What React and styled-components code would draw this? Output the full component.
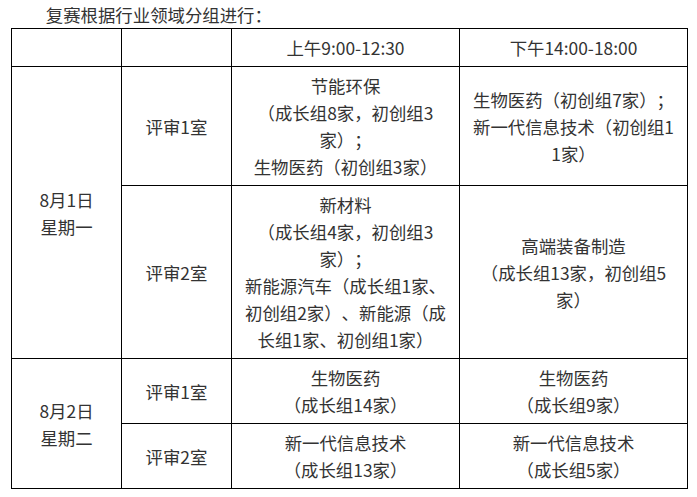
import React from 'react';
import styled, { createGlobalStyle } from 'styled-components';

const Global = createGlobalStyle`
  html, body {
    margin: 0;
    padding: 0;
    background: #fff;
  }
  body {
    font-family: "Noto Sans CJK SC", "Noto Sans", sans-serif;
    color: #333;
    text-spacing-trim: space-all;
  }
`;

const Page = styled.div`
  padding: 1px 0 0 11px;
  font-size: 17.4px;
  line-height: 27px;
`;

const Title = styled.p`
  margin: 0;
  text-indent: 2em;
`;

const Table = styled.table`
  border-collapse: collapse;
  table-layout: fixed;
  width: 677px;
`;

const Cell = styled.td`
  border: 1px solid #000;
  padding: 5px 4px;
  text-align: center;
  vertical-align: middle;
  white-space: nowrap;
  text-spacing-trim: space-all;
`;

const rows = [
  {
    date: ['8月1日', '星期一'],
    rooms: [
      {
        name: '评审1室',
        am: ['节能环保', '（成长组8家，初创组3', '家）；', '生物医药（初创组3家）'],
        pm: ['生物医药（初创组7家）；', '新一代信息技术（初创组1', '1家）'],
      },
      {
        name: '评审2室',
        am: [
          '新材料',
          '（成长组4家，初创组3',
          '家）；',
          '新能源汽车（成长组1家、',
          '初创组2家）、新能源（成',
          '长组1家、初创组1家）',
        ],
        pm: ['高端装备制造', '（成长组13家，初创组5', '家）'],
      },
    ],
  },
  {
    date: ['8月2日', '星期二'],
    rooms: [
      { name: '评审1室', am: ['生物医药', '（成长组14家）'], pm: ['生物医药', '（成长组9家）'] },
      { name: '评审2室', am: ['新一代信息技术', '（成长组13家）'], pm: ['新一代信息技术', '（成长组5家）'] },
    ],
  },
];

function Lines({ items }) {
  return items.map((t, i) => (
    <React.Fragment key={i}>
      {i > 0 && <br />}
      {t}
    </React.Fragment>
  ));
}

export default function App() {
  return (
    <Page>
      <Global />
      <Title>复赛根据行业领域分组进行：</Title>
      <Table>
        <colgroup>
          <col style={{ width: 110 }} />
          <col style={{ width: 110 }} />
          <col style={{ width: 228 }} />
          <col style={{ width: 228 }} />
        </colgroup>
        <tbody>
          <tr>
            <Cell />
            <Cell />
            <Cell>上午9:00-12:30</Cell>
            <Cell>下午14:00-18:00</Cell>
          </tr>
          {rows.map((day) =>
            day.rooms.map((room, j) => (
              <tr key={day.date[0] + j}>
                {j === 0 && (
                  <Cell rowSpan={day.rooms.length}>
                    <Lines items={day.date} />
                  </Cell>
                )}
                <Cell>{room.name}</Cell>
                <Cell>
                  <Lines items={room.am} />
                </Cell>
                <Cell>
                  <Lines items={room.pm} />
                </Cell>
              </tr>
            ))
          )}
        </tbody>
      </Table>
    </Page>
  );
}
